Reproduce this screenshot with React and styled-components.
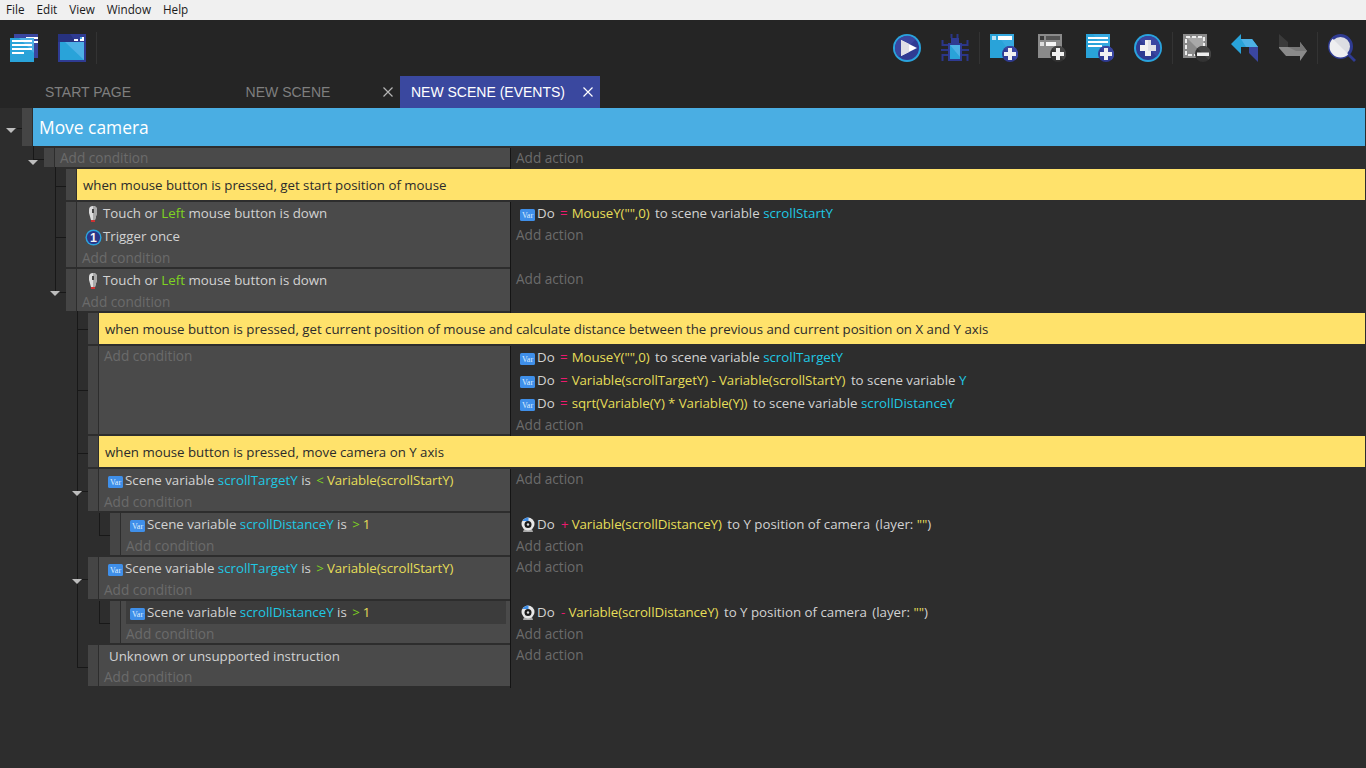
import React from "react";
import styled, { createGlobalStyle } from "styled-components";

const UI = `"Open Sans", "Noto Sans", "Liberation Sans", sans-serif`;

const Global = createGlobalStyle`
  html, body { margin: 0; padding: 0; background: #2d2d2d; }
  body { width: 1366px; height: 768px; overflow: hidden; font-family: ${UI}; }
`;

const Page = styled.div`
  width: 1366px;
  height: 768px;
  display: flex;
  flex-direction: column;
  background: #2d2d2d;
`;
const MenuBar = styled.nav`
  height: 20px;
  display: flex;
  background: #f0f0f0;
`;
const MenuItem = styled.span`
  padding: 0 6px;
  font-size: 11.7px;
  line-height: 19px;
  color: #1a1a1a;
`;
const Toolbar = styled.div`
  height: 56px;
  display: flex;
  background: #252525;
`;
const ToolButton = styled.button`
  width: 48px;
  height: 56px;
  padding: 14px 10px;
  border: 0;
  background: none;
  svg { display: block; width: 28px; height: 28px; }
`;
const ToolSep = styled.div`
  width: 1px;
  height: 32px;
  margin-top: 12px;
  background: #333;
`;
const Spacer = styled.div`
  flex: 1;
`;
const TabBar = styled.div`
  height: 32px;
  display: flex;
  background: #252525;
`;
const Tab = styled.div`
  width: 200px;
  display: flex;
  align-items: center;
  background: ${(p) => (p.$active ? "#3a489f" : "transparent")};
  color: ${(p) => (p.$active ? "#fff" : "#7f7f7f")};
`;
const TabLabel = styled.span`
  width: 176px;
  text-align: center;
  font-family: "Liberation Sans", Arial, sans-serif;
  font-size: 14px;
`;
const TabClose = styled.svg`
  width: 10px;
  height: 10px;
  margin-left: 7px;
  stroke: ${(p) => (p.$active ? "#fff" : "#b5b5b5")};
  stroke-width: 1.2;
`;
const Tree = styled.div`
  position: relative;
  flex: 1;
  display: flex;
  flex-direction: column;
  gap: 2px;
`;
const GroupRow = styled.div`
  height: 38px;
  margin: 0 1px 0 22px;
  display: flex;
`;
const Handle = styled.div`
  width: 10px;
  margin-right: 1px;
  flex: none;
  background: #454545;
`;
const GroupTitle = styled.div`
  flex: 1;
  padding: 1px 0 0 6px;
  background: #4aaee3;
  color: #fff;
  font-size: 17.4px;
  line-height: 37px;
`;
const CommentRow = styled.div`
  height: 31px;
  margin: 0 1px 0 ${(p) => p.$indent}px;
  display: flex;
`;
const CommentText = styled.div`
  flex: 1;
  padding: 1px 0 0 6px;
  background: #ffe26b;
  color: #2b2b2b;
  font-size: 13.25px;
  line-height: 30px;
  white-space: nowrap;
`;
const Row = styled.div`
  margin: 0 1px 0 ${(p) => p.$indent}px;
  display: flex;
`;
const Conditions = styled.div`
  width: ${(p) => 510 - p.$indent - 11}px;
  flex: none;
  background: #4a4a4a;
`;
const Actions = styled.div`
  flex: 1;
  margin-bottom: -2px;
  padding-bottom: 2px;
  border-left: 1px solid #141414;
`;
const Instr = styled.div`
  box-sizing: border-box;
  height: ${(p) => (p.$short ? 22 : 23)}px;
  margin: 0 4px 0 5px;
  padding: ${(p) => (p.$short ? 1 : 0)}px 0 0 ${(p) => (p.$plain ? 5 : 3)}px;
  display: flex;
  align-items: center;
  font-size: 13.3px;
  color: #d2d2d2;
  background: ${(p) => (p.$hover ? "#3c3c3c" : "transparent")};
`;
const InstrText = styled.span`
  padding-bottom: 2px;
  white-space: pre;
`;
const IconSlot = styled.span`
  width: 18px;
  flex: none;
  display: flex;
  justify-content: center;
  align-items: center;
`;
const AddLine = styled.div`
  height: 19px;
  padding: 1px 0 0 5px;
  box-sizing: border-box;
  font-size: 13.6px;
  line-height: 18px;
  color: #6b6b6b;
`;
const Tok = styled.span`
  margin-left: ${(p) => p.$gap || 0}px;
  letter-spacing: ${(p) => (p.$kind === "value" ? "-0.08px" : "0")};
  color: ${(p) =>
    ({ green: "#7ed321", value: "#e6de58", op: "#ea1a6e", name: "#1fc8e4" })[p.$kind] || "#d2d2d2"};
`;
const Spine = styled.div`
  position: absolute;
  left: ${(p) => p.$x}px;
  top: ${(p) => p.$y - 108}px;
  width: ${(p) => p.$w}px;
  height: ${(p) => p.$h}px;
  background: #181818;
`;
const Arrow = styled.div`
  position: absolute;
  left: ${(p) => p.$x - 5}px;
  top: ${(p) => p.$y - 108}px;
  border-left: 5px solid transparent;
  border-right: 5px solid transparent;
  border-top: 5px solid #bdbdbd;
`;
const VarSvg = styled.svg`
  width: 15px;
  height: 12px;
  margin: 3px 2px 0 0;
`;
const MouseSvg = styled.svg`
  width: 10px;
  height: 17px;
  margin: 2px 3px 0 0;
`;
const OnceSvg = styled.svg`
  width: 17px;
  height: 17px;
  margin: 2px 1px 0 0;
`;
const CameraSvg = styled.svg`
  width: 14px;
  height: 16px;
  margin: 1px 0 0 0;
`;

const Badge = ({ dark, minus }) => (
  <g>
    <circle cx="20" cy="20" r="8" fill={dark ? "#333" : "#2f3b92"} />
    <path d="M20 12a8 8 0 0 1 5.7 13.7L14.3 14.3A8 8 0 0 1 20 12z" fill={dark ? "#454545" : "#3a46a0"} />
    {minus ? (
      <rect x="14" y="18.5" width="12" height="3.5" fill="#eee" />
    ) : (
      <path d="M18 14h4v4h4v4h-4v4h-4v-4h-4v-4h4z" fill="#f1f1f1" />
    )}
  </g>
);
const Svg = ({ children }) => <svg viewBox="0 0 28 28">{children}</svg>;

const DocsIcon = () => (
  <Svg>
    <rect x="4" width="24" height="24" fill="#3a46a0" />
    <path d="M16 3h12v2H16zM16 7h12v2H16z" fill="#fff" />
    <rect y="4" width="24" height="24" fill="#29a3d9" />
    <path d="M9 4h15v15z" fill="#4db1e6" />
    <path d="M2 6h20v2H2zM2 10h20v2H2zM2 14h20v2H2zM2 18h12v2H2z" fill="#fff" />
  </Svg>
);
const WindowIcon = () => (
  <Svg>
    <rect width="28" height="28" fill="#2f3b92" />
    <path d="M0 0h12l6 8H0z" fill="#27327f" />
    <rect x="2" y="8" width="24" height="18" fill="#29a3d9" />
    <path d="M7 8h19v18z" fill="#4db1e6" />
    <rect x="16" y="5" width="4" height="2" fill="#fff" />
    <path d="M22 3h4v4h-4z" fill="#fff" />
    <rect x="22" y="3" width="2" height="2" fill="#4db1e6" />
  </Svg>
);
const PlayIcon = () => (
  <Svg>
    <circle cx="14" cy="14" r="14" fill="#2aa3dd" />
    <circle cx="14" cy="14" r="12" fill="#2f3b92" />
    <path d="M14 2a12 12 0 0 1 8.5 20.5L5.5 5.5A12 12 0 0 1 14 2z" fill="#3a46a0" transform="rotate(-90 14 14)" />
    <path d="M8 6l16 8-16 8z" fill="#fff" />
    <path d="M8 22l8-4v-8l-8-4z" fill="#dfe0e6" />
  </Svg>
);
const BugIcon = () => (
  <Svg>
    <path
      d="M10.500 4V0M16.500 4V0M7 11H1.500V6M7 16H0M7 21H1.500v6M21 11h5.500V6M21 16h7M21 21h5.500v6"
      fill="none"
      stroke="#2b3688"
      strokeWidth="2"
    />
    <rect x="10" y="4" width="8" height="6" fill="#2f3b92" />
    <rect x="7" y="9" width="14" height="18" fill="#2f3b92" />
    <rect x="9" y="11" width="10" height="14" fill="#29a3d9" />
    <path d="M9 11h10v12z" fill="#4db1e6" />
  </Svg>
);
const WindowAddIcon = () => (
  <Svg>
    <rect width="24" height="24" fill="#29a3d9" />
    <path d="M7 0h17v24z" fill="#36a9e0" />
    <rect x="2" y="2" width="4" height="4" fill="#b9e2f5" />
    <rect x="8" y="2" width="14" height="4" fill="#fff" />
    <Badge />
  </Svg>
);
const GridAddIcon = () => (
  <Svg>
    <rect width="24" height="24" fill="#8a8a8a" />
    <rect x="2" y="2" width="4" height="4" fill="#3a3a3a" />
    <rect x="8" y="2" width="14" height="4" fill="#555" />
    <rect x="2" y="8" width="4" height="4" fill="#ddd" />
    <rect x="8" y="8" width="10" height="4" fill="#f5f5f5" />
    <Badge dark />
  </Svg>
);
const DocAddIcon = () => (
  <Svg>
    <rect width="24" height="24" fill="#29a3d9" />
    <path d="M7 0h17v24z" fill="#36a9e0" />
    <path d="M2 3h20v2H2zM2 7h20v2H2zM2 11h14v2H2z" fill="#fff" />
    <Badge />
  </Svg>
);
const PlusCircleIcon = () => (
  <Svg>
    <circle cx="14" cy="14" r="14" fill="#2aa3dd" />
    <circle cx="14" cy="14" r="12" fill="#2f3b92" />
    <path d="M14 2a12 12 0 0 1 8.500 20.500L5.500 5.500A12 12 0 0 1 14 2z" fill="#3a46a0" />
    <path d="M11 6h6v5h5v6h-5v5h-6v-5H6v-6h5z" fill="#f1f1f1" />
    <path d="M14 6h3v5h5v6h-8z" fill="#dfe0e6" />
  </Svg>
);
const SelectRemoveIcon = () => (
  <Svg>
    <rect width="24" height="24" fill="#8a8a8a" />
    <path d="M3 3h18v18z" fill="#a8a8a8" />
    <rect x="3" y="3" width="18" height="18" fill="none" stroke="#eee" strokeWidth="2" strokeDasharray="4 2" />
    <Badge dark minus />
  </Svg>
);
const UndoIcon = () => (
  <Svg>
    <path d="M0 10L10 0v5h11l6 8H10v7z" fill="#29a3d9" />
    <path d="M10 0v5h11l6 8H15l-5-8z" fill="#4db1e6" />
    <path d="M18 13h9v15l-9-9z" fill="#3a46a0" />
  </Svg>
);
const RedoIcon = () => (
  <Svg>
    <path d="M0 0l9 8v5H0z" fill="#3a3a3a" />
    <path d="M0 13h21V8l7 9-7 10v-5H7l-7-8z" fill="#8a8a8a" />
    <path d="M9 13h12V8l7 9H17z" fill="#777" />
  </Svg>
);
const SearchIcon = () => (
  <Svg>
    <path d="M19 21l7 7 2-2-7-7z" fill="#2f3b92" />
    <circle cx="12.500" cy="12.500" r="11" fill="#dcdde2" stroke="#2f3b92" strokeWidth="3" />
    <path d="M4.720 4.720L20.280 20.280A11 11 0 0 1 4.720 4.720z" fill="#eeeef0" />
  </Svg>
);
const CloseGlyph = ({ active }) => (
  <TabClose $active={active} viewBox="0 0 10 10">
    <path d="M0.500 0.500l9 9M9.500 0.500l-9 9" />
  </TabClose>
);
const VarIcon = () => (
  <VarSvg viewBox="0 0 15 12">
    <rect width="15" height="12" rx="1.500" fill="#3f8fe9" />
    <text x="7.500" y="9" textAnchor="middle" fontFamily="Liberation Serif, serif" fontSize="8" fill="#dfeeff">
      Var
    </text>
  </VarSvg>
);
const MouseIcon = () => (
  <MouseSvg viewBox="0 0 10 17">
    <path d="M1 4a4 4 0 0 1 8 0v3l-2 7H3L1 7z" fill="#dcdcdc" />
    <path d="M5 0a4 4 0 0 1 4 4v3l-2 7H5z" fill="#a9a9a9" />
    <rect x="4" y="3" width="2" height="4" fill="#444" />
    <rect x="3" y="14" width="4" height="2" fill="#c33" />
  </MouseSvg>
);
const OnceIcon = () => (
  <OnceSvg viewBox="0 0 18 18">
    <circle cx="9" cy="9" r="8.500" fill="#2aa3dd" />
    <circle cx="9" cy="9" r="7" fill="#2a3688" />
    <text x="9" y="14" textAnchor="middle" fontFamily="Liberation Sans, sans-serif" fontWeight="700" fontSize="13" fill="#f4f4f4">
      1
    </text>
  </OnceSvg>
);
const CameraIcon = () => (
  <CameraSvg viewBox="0 0 14 16">
    <path d="M3 12h8l1 3H2z" fill="#a9a9a9" />
    <circle cx="7" cy="7" r="6.500" fill="#e8e8e8" />
    <path d="M1.500 4a6.500 6.500 0 0 1 6-3.500V4z" fill="#3f8fe9" />
    <circle cx="7" cy="7.500" r="3.500" fill="#1b1b1b" />
    <circle cx="7" cy="7.500" r="1.200" fill="#ddd" />
  </CameraSvg>
);

const Item = ({ icon, children, ...rest }) => (
  <Instr {...rest}>
    <IconSlot>{icon}</IconSlot>
    <InstrText>{children}</InstrText>
  </Instr>
);

const Event = ({ indent, conds, acts }) => (
  <Row $indent={indent}>
    <Handle />
    <Conditions $indent={indent}>
      {conds}
      <AddLine>Add condition</AddLine>
    </Conditions>
    <Actions>
      {acts}
      <AddLine>Add action</AddLine>
    </Actions>
  </Row>
);
const Comment = ({ indent, children }) => (
  <CommentRow $indent={indent}>
    <Handle />
    <CommentText>{children}</CommentText>
  </CommentRow>
);

const MouseCond = () => (
  <Item icon={<MouseIcon />}>
    Touch or <Tok $kind="green">Left</Tok> mouse button is down
  </Item>
);
const VarCond = ({ name, op, value, hover }) => (
  <Item icon={<VarIcon />} $hover={hover}>
    Scene variable <Tok $kind="name">{name}</Tok> is <Tok $kind="green" $gap={2}>{op}</Tok>
    <Tok $kind="value" $gap={3}>{value}</Tok>
  </Item>
);
const VarAct = ({ value, name }) => (
  <Item icon={<VarIcon />}>
    Do <Tok $kind="op" $gap={2}>=</Tok>
    <Tok $kind="value" $gap={4}>{value}</Tok> <Tok $gap={2}>to scene variable</Tok> <Tok $kind="name">{name}</Tok>
  </Item>
);
const CamAct = ({ op, value }) => (
  <Item icon={<CameraIcon />}>
    Do <Tok $kind="op" $gap={3}>{op}</Tok>
    <Tok $kind="value" $gap={3}>{value}</Tok> <Tok $gap={2}>to Y position of camera</Tok> <Tok $gap={2}>(layer:</Tok> <Tok $kind="value">""</Tok>)
  </Item>
);

const spines = [
  [17, 128, 5, 1], [33, 146, 1, 14], [33, 159, 11, 1],
  [55, 167, 1, 126], [55, 186, 11, 1], [55, 237, 11, 1], [60, 292, 6, 1],
  [77, 311, 1, 356], [77, 329, 11, 1], [77, 390, 11, 1], [77, 453, 11, 1],
  [82, 491, 6, 1], [82, 579, 6, 1], [77, 667, 11, 1],
  [99, 513, 1, 22], [99, 535, 11, 1], [99, 601, 1, 22], [99, 623, 11, 1],
];
const arrows = [[11, 128], [33, 160], [55, 291], [77, 491], [77, 579]];

export default function App() {
  return (
    <Page>
      <Global />
      <MenuBar>
        {["File", "Edit", "View", "Window", "Help"].map((m) => (
          <MenuItem key={m}>{m}</MenuItem>
        ))}
      </MenuBar>
      <Toolbar>
        <ToolButton><DocsIcon /></ToolButton>
        <ToolButton><WindowIcon /></ToolButton>
        <ToolSep />
        <Spacer />
        <ToolButton><PlayIcon /></ToolButton>
        <ToolButton><BugIcon /></ToolButton>
        <ToolSep />
        <ToolButton><WindowAddIcon /></ToolButton>
        <ToolButton><GridAddIcon /></ToolButton>
        <ToolButton><DocAddIcon /></ToolButton>
        <ToolButton><PlusCircleIcon /></ToolButton>
        <ToolSep />
        <ToolButton><SelectRemoveIcon /></ToolButton>
        <ToolButton><UndoIcon /></ToolButton>
        <ToolButton><RedoIcon /></ToolButton>
        <ToolSep />
        <ToolButton><SearchIcon /></ToolButton>
      </Toolbar>
      <TabBar>
        <Tab><TabLabel>START PAGE</TabLabel></Tab>
        <Tab><TabLabel>NEW SCENE</TabLabel><CloseGlyph /></Tab>
        <Tab $active><TabLabel>NEW SCENE (EVENTS)</TabLabel><CloseGlyph active /></Tab>
      </TabBar>
      <Tree>
        <GroupRow>
          <Handle />
          <GroupTitle>Move camera</GroupTitle>
        </GroupRow>
        <Event indent={44} />
        <Comment indent={66}>when mouse button is pressed, get start position of mouse</Comment>
        <Event
          indent={66}
          conds={<><MouseCond /><Item icon={<OnceIcon />}>Trigger once</Item></>}
          acts={<VarAct value={'MouseY("",0)'} name="scrollStartY" />}
        />
        <Event indent={66} conds={<MouseCond />} />
        <Comment indent={88}>
          when mouse button is pressed, get current position of mouse and calculate distance between the previous and current position on X and Y axis
        </Comment>
        <Event
          indent={88}
          acts={
            <>
              <VarAct value={'MouseY("",0)'} name="scrollTargetY" />
              <VarAct value="Variable(scrollTargetY) - Variable(scrollStartY)" name="Y" />
              <VarAct value="sqrt(Variable(Y) * Variable(Y))" name="scrollDistanceY" />
            </>
          }
        />
        <Comment indent={88}>when mouse button is pressed, move camera on Y axis</Comment>
        <Event indent={88} conds={<VarCond name="scrollTargetY" op="<" value="Variable(scrollStartY)" />} />
        <Event
          indent={110}
          conds={<VarCond name="scrollDistanceY" op=">" value="1" />}
          acts={<CamAct op="+" value="Variable(scrollDistanceY)" />}
        />
        <Event indent={88} conds={<VarCond name="scrollTargetY" op=">" value="Variable(scrollStartY)" />} />
        <Event
          indent={110}
          conds={<VarCond name="scrollDistanceY" op=">" value="1" hover />}
          acts={<CamAct op="-" value="Variable(scrollDistanceY)" />}
        />
        <Event indent={88} conds={<Instr $plain $short><InstrText>Unknown or unsupported instruction</InstrText></Instr>} />
        {spines.map(([x, y, w, h]) => (
          <Spine key={`${x}-${y}`} $x={x} $y={y} $w={w} $h={h} />
        ))}
        {arrows.map(([x, y]) => (
          <Arrow key={`${x}-${y}`} $x={x} $y={y} />
        ))}
      </Tree>
    </Page>
  );
}
